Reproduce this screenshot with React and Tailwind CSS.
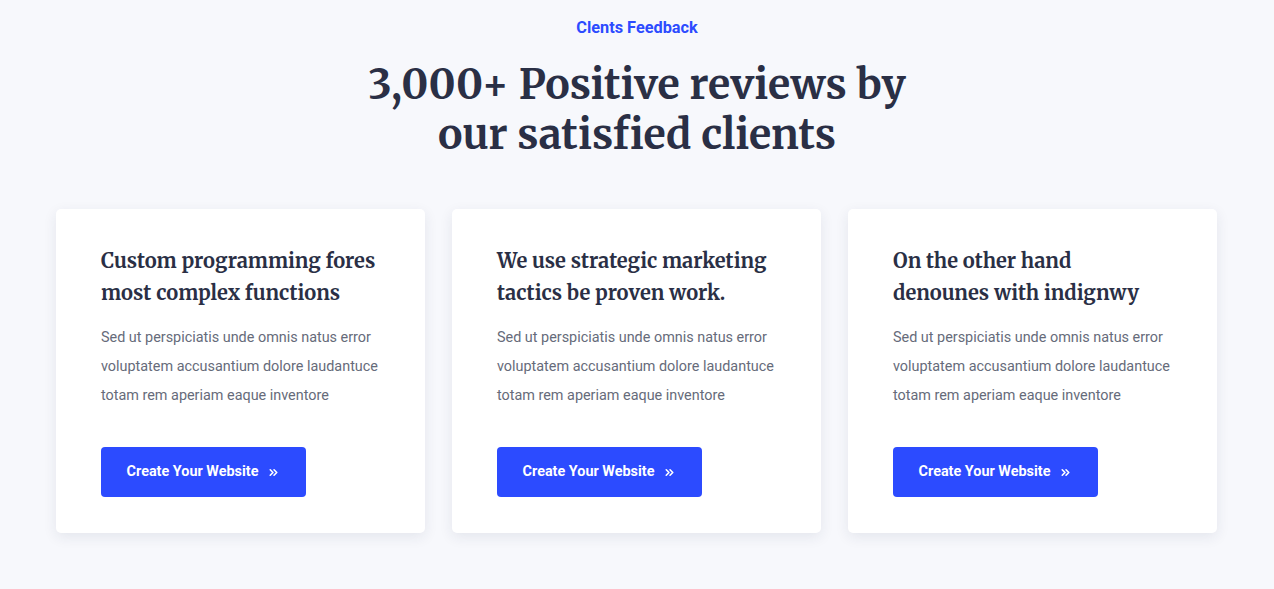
import { ChevronsRight } from 'lucide-react'

const cards = [
	{ title: ['Custom programming fores', 'most complex functions'] },
	{ title: ['We use strategic marketing', 'tactics be proven work.'] },
	{ title: ['On the other hand', 'denounes with indignwy'] },
]

const serif = "font-['Merriweather','DejaVu_Serif',serif]"

const App = () => {
	return (
		<div className="min-h-[589px] bg-[#f7f8fc] font-['Roboto',sans-serif]">
			{/* Header */}
			<div className="pt-[18px] text-center">
				<p className="text-[16.3px] leading-[20px] font-bold text-[#2c4bff]">Clents Feedback</p>
				<h2 className={`${serif} mt-[22px] text-[41px] leading-[50px] font-bold text-[#2a2f45]`}>
					3,000+ Positive reviews by
					<br />
					our satisfied clients
				</h2>
			</div>

			{/* Cards */}
			<div className="mx-auto mt-[49px] grid w-[1162px] grid-cols-[369px_369px_369px] gap-[27px]">
				{cards.map((card, i) => (
					<div
						key={i}
						className="rounded-[5px] bg-white px-[45px] pt-[36px] pb-[36px] shadow-[0_4px_14px_rgba(30,40,80,0.09)]"
					>
						<h3 className={`${serif} text-[20px] leading-[32px] font-bold text-[#2a2f45]`}>
							{card.title[0]}
							<br />
							{card.title[1]}
						</h3>
						<p className="mt-[14px] text-[14.4px] leading-[29px] text-[#666b7a]">
							Sed ut perspiciatis unde omnis natus error voluptatem accusantium dolore laudantuce totam rem aperiam eaque inventore
						</p>
						<button className="mt-[37px] flex h-[50px] w-[205px] items-center justify-center gap-[9px] rounded-[4px] bg-[#2c4bff] text-[14.4px] font-bold text-white">
							Create Your Website
							<ChevronsRight size={13} strokeWidth={3} />
						</button>
					</div>
				))}
			</div>
		</div>
	)
}

export default App
